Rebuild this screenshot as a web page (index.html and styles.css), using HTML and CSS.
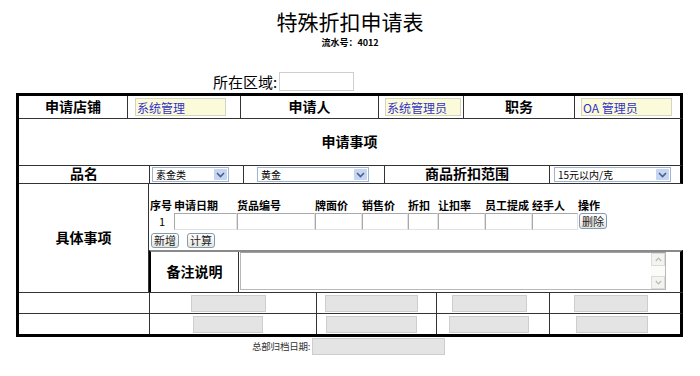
FILE: index.html
```html
<!DOCTYPE html>
<html lang="zh-CN">
<head>
<meta charset="utf-8">
<title>特殊折扣申请表</title>
<link rel="stylesheet" href="styles.css">
</head>
<body>
<div class="page">
  <header class="doc-head">
    <h1 class="doc-title">特殊折扣申请表</h1>
    <div class="doc-serial">流水号：4012</div>
  </header>

  <div class="region">
    <span class="region-label">所在区域:</span>
    <input class="region-input" type="text">
  </div>

  <div class="frame">
    <div class="band band-1 closed">
      <div class="cell label">申请店铺</div>
      <div class="cell field pad-7"><input class="yellow w91" type="text" value="系统管理" readonly></div>
      <div class="cell label">申请人</div>
      <div class="cell field pad-6"><input class="yellow w76" type="text" value="系统管理员" readonly></div>
      <div class="cell label">职务</div>
      <div class="cell field pad-6"><input class="yellow w91" type="text" value="OA 管理员" readonly></div>
    </div>

    <div class="band band-2 closed">
      <div class="cell label">申请事项</div>
    </div>

    <div class="band band-3 closed">
      <div class="cell label">品名</div>
      <div class="cell field pad-2">
        <div class="select w77"><span class="select-value">素金类</span><span class="select-arrow"><svg viewBox="0 0 9 6" width="9" height="6"><path d="M1 1l3.5 3.5L8 1" fill="none" stroke="#4d6185" stroke-width="1.6"/></svg></span></div>
      </div>
      <div class="cell field pad-13">
        <div class="select w112"><span class="select-value">黄金</span><span class="select-arrow"><svg viewBox="0 0 9 6" width="9" height="6"><path d="M1 1l3.5 3.5L8 1" fill="none" stroke="#4d6185" stroke-width="1.6"/></svg></span></div>
      </div>
      <div class="cell label">商品折扣范围</div>
      <div class="cell field pad-4">
        <div class="select w117"><span class="select-value">15元以内/克</span><span class="select-arrow"><svg viewBox="0 0 9 6" width="9" height="6"><path d="M1 1l3.5 3.5L8 1" fill="none" stroke="#4d6185" stroke-width="1.6"/></svg></span></div>
      </div>
    </div>

    <div class="band band-4">
      <div class="cell label">具体事项</div>
      <div class="cell detail">
        <table class="items">
          <colgroup>
            <col class="c24"><col class="c63"><col class="c78"><col class="c47"><col class="c46">
            <col class="c30"><col class="c47"><col class="c47"><col class="c46"><col class="c30">
          </colgroup>
          <thead>
            <tr>
              <th>序号</th><th>申请日期</th><th>货品编号</th><th>牌面价</th><th>销售价</th>
              <th>折扣</th><th>让扣率</th><th>员工提成</th><th>经手人</th><th>操作</th>
            </tr>
          </thead>
          <tbody>
            <tr>
              <td class="num">1</td>
              <td><input class="cell-input" type="text"></td>
              <td><input class="cell-input" type="text"></td>
              <td><input class="cell-input" type="text"></td>
              <td><input class="cell-input" type="text"></td>
              <td><input class="cell-input" type="text"></td>
              <td><input class="cell-input" type="text"></td>
              <td><input class="cell-input" type="text"></td>
              <td><input class="cell-input" type="text"></td>
              <td class="op"><button class="btn btn-del" type="button">删除</button></td>
            </tr>
          </tbody>
        </table>
        <div class="actions">
          <button class="btn" type="button">新增</button>
          <button class="btn" type="button">计算</button>
        </div>
        <div class="remark">
          <div class="remark-label">备注说明</div>
          <div class="remark-field">
            <div class="textbox">
              <textarea class="textbox-area"></textarea>
              <div class="scrollbar">
                <span class="scroll-btn"><svg viewBox="0 0 7 5" width="7" height="5"><path d="M0.8 4L3.5 1.2L6.2 4" fill="none" stroke="#b9b9b9" stroke-width="1.2"/></svg></span>
                <span class="scroll-btn"><svg viewBox="0 0 7 5" width="7" height="5"><path d="M0.8 1L3.5 3.8L6.2 1" fill="none" stroke="#b9b9b9" stroke-width="1.2"/></svg></span>
              </div>
            </div>
          </div>
        </div>
      </div>
    </div>

    <div class="band band-5 closed">
      <div class="cell"></div>
      <div class="cell field ml-41"><input class="gray w75" type="text" disabled></div>
      <div class="cell field ml-8"><input class="gray w93" type="text" disabled></div>
      <div class="cell field ml-15"><input class="gray w75" type="text" disabled></div>
      <div class="cell field ml-24"><input class="gray w74" type="text" disabled></div>
    </div>

    <div class="band band-6 closed">
      <div class="cell"></div>
      <div class="cell field ml-43"><input class="gray w70" type="text" disabled></div>
      <div class="cell field ml-9"><input class="gray w91" type="text" disabled></div>
      <div class="cell field ml-12"><input class="gray w80" type="text" disabled></div>
      <div class="cell field ml-26"><input class="gray w72" type="text" disabled></div>
    </div>
  </div>

  <div class="archive">
    <span class="archive-label">总部归档日期:</span>
    <input class="gray w133 archive-input" type="text" disabled>
  </div>
</div>
</body>
</html>
```

FILE: styles.css
```css
* { box-sizing: border-box; }

body {
  margin: 0;
  background: #fff;
  color: #000;
  font-family: "Noto Sans CJK SC", "Noto Sans", "Liberation Sans", sans-serif;
}

.page { width: 700px; }

/* header */
.doc-head { text-align: center; padding-top: 10px; }
.doc-title {
  margin: 0;
  height: 24px;
  font-size: 21px;
  font-weight: 400;
  line-height: 22px;
}
.doc-serial {
  margin-top: 3px;
  height: 11px;
  font-size: 9px;
  font-weight: 700;
  line-height: 11px;
}

/* region line */
.region {
  display: flex;
  align-items: center;
  padding-left: 213px;
  margin-top: 24px;
  height: 19px;
}
.region-label { font-size: 15px; line-height: 19px; }
.region-input {
  width: 75px;
  height: 19px;
  margin-left: 2px;
  border: 1px solid #cfcfcf;
  background: #fff;
}

/* frame: right edge drawn per band (open beside the item table) */
.frame {
  margin: 2px 0 0 16px;
  width: 667px;
  border: 3px solid #000;
  border-right: 0;
}

.band {
  display: grid;
  border-bottom: 1px solid #333;
}
.band:last-child { border-bottom: 0; }
.band.closed { border-right: 3px solid #000; }
.band > .cell + .cell { border-left: 1px solid #333; }

.band-1 { grid-template-columns: 108px 113px 138px 85px 111px 106px; height: 23px; }
.band-2 { grid-template-columns: 1fr; height: 47px; }
.band-3 { grid-template-columns: 130px 94px 141px 165px 131px; height: 18px; }
.band-4 { grid-template-columns: 129px 535px; height: 109px; }
.band-5 { grid-template-columns: 130px 167px 120px 113px 131px; height: 21px; }
.band-6 { grid-template-columns: 130px 167px 120px 113px 131px; height: 20px; }

.cell { min-width: 0; min-height: 0; }

.label {
  display: flex;
  align-items: center;
  justify-content: center;
  padding-bottom: 3px;
  font-size: 14px;
  font-weight: 700;
  line-height: 1;
  white-space: nowrap;
}
.field { display: flex; align-items: center; }

.pad-2 { padding-left: 2px; }
.pad-4 { padding-left: 4px; }
.pad-6 { padding-left: 6px; }
.pad-7 { padding-left: 7px; }
.pad-13 { padding-left: 13px; }
.ml-8 { padding-left: 8px; }
.ml-9 { padding-left: 9px; }
.ml-12 { padding-left: 12px; }
.ml-15 { padding-left: 15px; }
.ml-24 { padding-left: 24px; }
.ml-26 { padding-left: 26px; }
.ml-41 { padding-left: 41px; }
.ml-43 { padding-left: 43px; }

/* inputs */
input { font-family: inherit; margin: 0; }

.yellow {
  height: 18px;
  padding: 0 1px;
  border: 1px solid #d4d4c0;
  background: #fbfbd9;
  color: #3232c8;
  font-size: 12px;
  line-height: 16px;
}
.gray {
  height: 17px;
  border: 1px solid #cdcdcd;
  background: #e4e4e4;
}

.w70 { width: 70px; }
.w72 { width: 72px; }
.w74 { width: 74px; }
.w75 { width: 75px; }
.w76 { width: 76px; }
.w77 { width: 77px; }
.w80 { width: 80px; }
.w91 { width: 91px; }
.w93 { width: 93px; }
.w112 { width: 112px; }
.w117 { width: 117px; }
.w133 { width: 133px; }

/* fake select */
.select {
  display: flex;
  height: 15px;
  border: 1px solid #9fb5d0;
  background: #fff;
  font-size: 10px;
}
.select-value { flex: 1; padding-left: 3px; line-height: 13px; white-space: nowrap; }
.select-arrow {
  width: 13px;
  margin: 1px;
  background: #c6d5f3;
  border-radius: 1px;
  display: flex;
  align-items: center;
  justify-content: center;
}

/* detail cell */
.detail { padding-top: 13px; }

.items {
  margin-left: 1px;
  border-collapse: collapse;
  table-layout: fixed;
  width: 458px;
}
.c24 { width: 24px; }
.c30 { width: 30px; }
.c46 { width: 46px; }
.c47 { width: 47px; }
.c63 { width: 63px; }
.c78 { width: 78px; }

.items th {
  height: 16px;
  padding: 0;
  text-align: left;
  font-size: 11px;
  font-weight: 700;
  line-height: 16px;
  white-space: nowrap;
  overflow: hidden;
}
.items td { height: 17px; padding: 0; line-height: 17px; }
.items td.num { text-align: center; font-size: 11px; }
.cell-input {
  display: block;
  width: 100%;
  height: 17px;
  border: 1px solid;
  border-color: #a9a9a9 #e2e2e2 #e2e2e2 #a9a9a9;
  background: #fff;
}
.op { text-align: left; }

.btn {
  display: inline-flex;
  align-items: center;
  justify-content: center;
  height: 15px;
  padding: 0 2px;
  border: 1px solid #7f9bb8;
  border-radius: 3px;
  background: linear-gradient(#ffffff, #e6e6de);
  font-family: inherit;
  font-size: 11px;
  line-height: 1;
  white-space: nowrap;
  color: #222;
  vertical-align: top;
}
.btn-del { width: 28px; height: 16px; margin-left: 1px; }

.actions {
  display: flex;
  gap: 8px;
  margin: 3px 0 0 2px;
  height: 15px;
}

.remark {
  margin-top: 2px;
  height: 42px;
  display: grid;
  grid-template-columns: 88px 1fr;
  border-top: 2px solid #8a8a8a;
  border-left: 2px solid #000;
  border-right: 3px solid #000;
}
.remark-label {
  display: flex;
  align-items: center;
  justify-content: center;
  padding-bottom: 3px;
  font-size: 14px;
  font-weight: 700;
  line-height: 1;
  border-right: 1px solid #333;
}
.remark-field { padding: 0 14px 2px 1px; }

.textbox {
  display: flex;
  height: 38px;
  border: 1px solid #b8b8b8;
  border-top-color: #a0a0a0;
}
.textbox-area {
  flex: 1;
  border: 0;
  resize: none;
  outline: none;
  overflow: hidden;
  padding: 0;
  margin: 0;
}
.scrollbar {
  width: 14px;
  display: flex;
  flex-direction: column;
  justify-content: space-between;
  background: #fbfbf9;
}
.scroll-btn {
  height: 13px;
  border: 1px solid #dcdcd6;
  background: #f3f3ef;
  display: flex;
  align-items: center;
  justify-content: center;
}

/* footer */
.archive {
  display: flex;
  align-items: center;
  padding-left: 252px;
  margin-top: 1px;
}
.archive-label {
  font-size: 9.5px;
  color: #333;
  line-height: 17px;
  letter-spacing: -0.2px;
}
.archive-input { margin-left: 2px; }
```
